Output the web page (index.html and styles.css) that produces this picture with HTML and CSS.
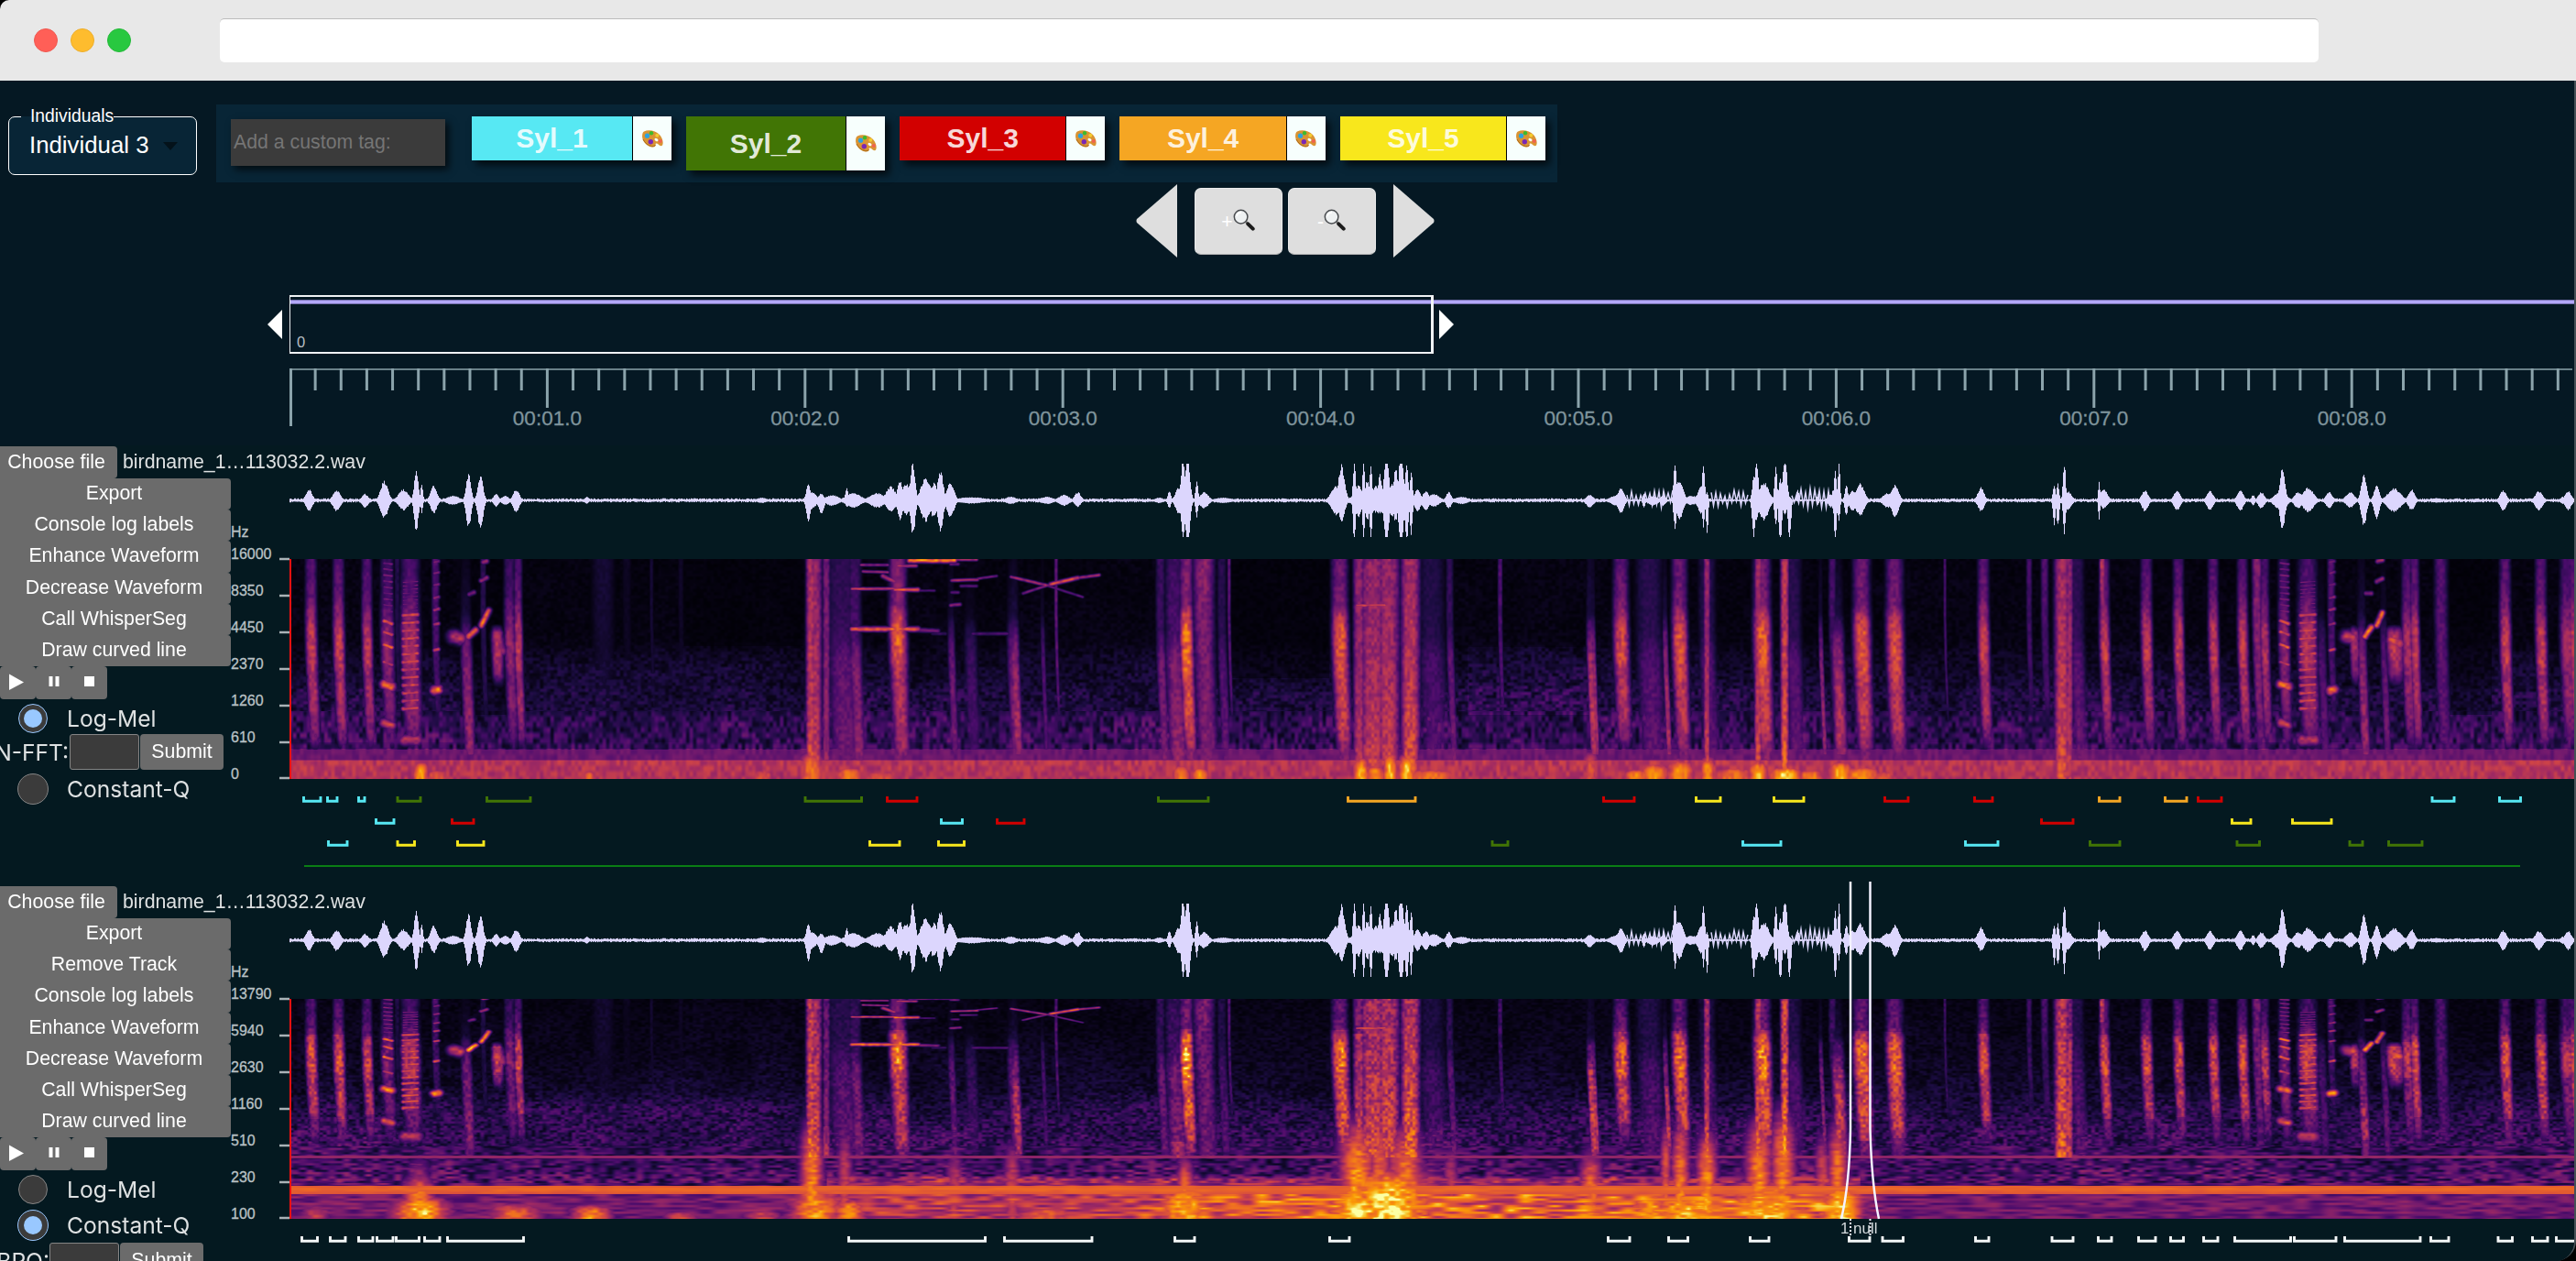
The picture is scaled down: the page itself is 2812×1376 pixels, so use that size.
FILE: index.html
```html
<!DOCTYPE html>
<html lang="en">
<head>
<meta charset="utf-8">
<title>Annotator</title>
<link rel="stylesheet" href="styles.css">
</head>
<body>
<svg class="defs" aria-hidden="true">
  <symbol id="palette" viewBox="0 0 23 19">
    <path d="M2 1.5C7-1 15 .8 19 5c3 3.200 4.500 8.500 3.200 11.200-1 2-3.500.3-4.600-.8-1.400-1.500-3.600-1.200-3 .6.600 1.900-1.600 3-4.200 2.500C5 17.500.5 12.500.1 7.500 0 4.500.4 2.500 2 1.500z" fill="#d99433"/>
    <path d="M1 10c2 4 5.500 7 9.500 7.600 2.500.4 4-.6 3.800-1.700" fill="none" stroke="#a9691b" stroke-width="1"/>
    <ellipse cx="15.500" cy="10.500" rx="2.200" ry="1.500" transform="rotate(35 15.500 10.500)" fill="#f7fffd"/>
    <circle cx="5.500" cy="6.200" r="2.600" fill="#2aa3e0"/>
    <circle cx="10" cy="3.300" r="2.200" fill="#3dba2c"/>
    <circle cx="16.300" cy="5.800" r="2" fill="#f3cc2f"/>
    <circle cx="9.300" cy="12.700" r="2.700" fill="#7a27b5"/>
    <circle cx="19.800" cy="12" r="2.100" fill="#f0644f"/>
  </symbol>
  <symbol id="magnifier" viewBox="0 0 24 24">
    <path d="M14 14l3 3" stroke="#777" stroke-width="2.500"/>
    <path d="M16.300 16.300l5.400 5.400" stroke="#1c1c1c" stroke-width="4" stroke-linecap="round"/>
    <circle cx="8.600" cy="8.600" r="7.300" fill="#eef1f2" stroke="#4a4d50" stroke-width="1.500"/>
    <path d="M4 8a5 5 0 0 1 5-4" fill="none" stroke="#fff" stroke-width="1.500"/>
  </symbol>
</svg>

<header class="browser">
  <div class="dots"><i class="dot red"></i><i class="dot amber"></i><i class="dot green"></i></div>
  <div class="address"></div>
</header>

<main class="app">
  <section class="toolbar">
    <div class="individuals">
      <span class="legend">Individuals</span>
      <span class="value">Individual 3</span>
      <i class="caret"></i>
    </div>
    <div class="tags">
      <div class="tag-input">Add a custom tag:</div>
      <div class="tag cyan"><span>Syl_1</span><b><svg><use href="#palette"/></svg></b></div>
      <div class="tag green active"><span>Syl_2</span><b><svg><use href="#palette"/></svg></b></div>
      <div class="tag red wide"><span>Syl_3</span><b><svg><use href="#palette"/></svg></b></div>
      <div class="tag orange wide"><span>Syl_4</span><b><svg><use href="#palette"/></svg></b></div>
      <div class="tag yellow wide"><span>Syl_5</span><b><svg><use href="#palette"/></svg></b></div>
    </div>
  </section>

  <nav class="zoom-nav">
    <svg class="arrow" viewBox="0 0 45 80"><path d="M45 0V80L1 42Q0 40 1 38z"/></svg>
    <div class="zoom-buttons">
      <div class="zoom-btn"><span>+</span><svg><use href="#magnifier"/></svg></div>
      <div class="zoom-btn"><span>-</span><svg><use href="#magnifier"/></svg></div>
    </div>
    <svg class="arrow" viewBox="0 0 45 80"><path d="M0 0V80L44 42Q45 40 44 38z"/></svg>
  </nav>

  <section class="overview">
    <svg class="handle" viewBox="0 0 16 32"><path d="M16 0V32L0 16z"/></svg>
    <div class="window"><span>0</span></div>
    <svg class="handle" viewBox="0 0 16 32"><path d="M0 0V32L16 16z"/></svg>
    <i class="overview-line"></i>
  </section>

  <svg class="ruler" id="ruler"></svg>

  <section class="track">
    <div class="controls">
      <div class="file"><span class="btn choose">Choose file</span><span class="filename">birdname_1…113032.2.wav</span></div>
      <div class="btn">Export</div>
      <div class="btn">Console log labels</div>
      <div class="btn">Enhance Waveform</div>
      <div class="btn">Decrease Waveform</div>
      <div class="btn">Call WhisperSeg</div>
      <div class="btn">Draw curved line</div>
      <div class="player">
        <span><svg viewBox="0 0 40 36"><path d="M10 8.500L26 17.500 10 26z"/></svg></span>
        <span><svg viewBox="0 0 40 36"><path d="M14.500 11h4v11h-4zM21.500 11h4v11h-4z"/></svg></span>
        <span><svg viewBox="0 0 40 36"><path d="M14 11h11v11H14z"/></svg></span>
      </div>
      <div class="option"><i class="radio on"></i>Log-Mel</div>
      <div class="param nfft"><span>N-FFT:</span><i></i><b>Submit</b></div>
      <div class="option last"><i class="radio big"></i>Constant-Q</div>
    </div>
    <svg class="axis" data-labels="16000,8350,4450,2370,1260,610,0"></svg>
    <div class="data">
      <canvas class="wave" width="2494" height="124"></canvas>
      <canvas class="spec" width="2494" height="240" data-kind="mel"></canvas>
      <svg class="labels" id="labels-1"></svg>
    </div>
  </section>

  <section class="track">
    <div class="controls">
      <div class="file"><span class="btn choose">Choose file</span><span class="filename">birdname_1…113032.2.wav</span></div>
      <div class="btn">Export</div>
      <div class="btn">Remove Track</div>
      <div class="btn">Console log labels</div>
      <div class="btn">Enhance Waveform</div>
      <div class="btn">Decrease Waveform</div>
      <div class="btn">Call WhisperSeg</div>
      <div class="btn">Draw curved line</div>
      <div class="player">
        <span><svg viewBox="0 0 40 36"><path d="M10 8.500L26 17.500 10 26z"/></svg></span>
        <span><svg viewBox="0 0 40 36"><path d="M14.500 11h4v11h-4zM21.500 11h4v11h-4z"/></svg></span>
        <span><svg viewBox="0 0 40 36"><path d="M14 11h11v11H14z"/></svg></span>
      </div>
      <div class="option"><i class="radio"></i>Log-Mel</div>
      <div class="option"><i class="radio big on"></i>Constant-Q</div>
      <div class="param bpo"><span>BPO:</span><i></i><b>Submit</b></div>
    </div>
    <svg class="axis" data-labels="13790,5940,2630,1160,510,230,100"></svg>
    <div class="data">
      <canvas class="wave" width="2494" height="124"></canvas>
      <canvas class="spec" width="2494" height="240" data-kind="cq"></canvas>
      <svg class="labels" id="labels-2"></svg>
    </div>
    <svg class="selection" viewBox="0 0 60 400">
      <path d="M19 0V270Q18 330 9 368M40.500 0V270Q42 330 50 368"/>
      <path class="dashed" d="M19 368V386M40.500 368V386"/>
      <text x="8" y="384">1</text><text x="22" y="384">null</text>
    </svg>
  </section>
</main>
<script src="charts.js"></script>
</body>
</html>
```
FILE: styles.css
```css
* { box-sizing: border-box; }
body {
  margin: 0;
  width: 2812px;
  height: 1376px;
  overflow: hidden;
  background: #000;
  font-family: "Liberation Sans", Arial, sans-serif;
  color: rgba(255, 255, 255, .87);
}
.defs { position: absolute; width: 0; height: 0; }
i { font-style: normal; }

/* Browser chrome */
.browser {
  display: flex;
  align-items: center;
  height: 88px;
  background: #e8e8e8;
  border-top-left-radius: 10px;
}
.dots { display: flex; gap: 14px; width: 240px; padding-left: 37px; }
.dot { width: 26px; height: 26px; border-radius: 50%; border: 1px solid; }
.dot.red { background: #ff5f57; border-color: #f0574f; }
.dot.amber { background: #febc2e; border-color: #eeae28; }
.dot.green { background: #28c840; border-color: #22ba38; }
.address { width: 2291px; height: 48px; background: #fff; border-top: 1px solid #bcbcbc; border-radius: 5px; }

.app {
  height: 1288px;
  background: #051823;
  border-right: 2px solid #465056;
  border-bottom-right-radius: 22px;
  overflow: hidden;
}

/* Toolbar */
.toolbar { display: flex; align-items: flex-start; gap: 21px; padding: 26px 0 0 9px; }
.individuals {
  display: flex;
  align-items: center;
  width: 206px;
  height: 64px;
  margin-top: 13px;
  padding-left: 22px;
  gap: 15px;
  position: relative;
  background: #082536;
  border: 1px solid #fff;
  border-radius: 7px;
  color: #fff;
  font-size: 25.8px;
}
.individuals .value { margin-bottom: 1px; white-space: nowrap; }
.legend {
  position: absolute;
  left: 13px;
  top: -13px;
  padding-left: 10px;
  font-size: 19.3px;
  line-height: 24px;
  background: linear-gradient(#051823 12px, #082536 12px);
}
.caret { border: 8px solid transparent; border-top: 9px solid #04121a; border-bottom: 0; }
.tags {
  display: flex;
  align-items: flex-start;
  gap: 16px;
  width: 1464px;
  height: 85px;
  padding: 13px 0 0 16px;
  background: #082536;
}
.tag-input {
  width: 234px;
  height: 51px;
  margin: 3px 13px 0 0;
  padding-left: 3px;
  background: #3b3b3b;
  color: #757575;
  font-size: 21.3px;
  line-height: 50px;
  box-shadow: 4px 4px 8px rgba(0, 0, 0, .7);
}
.tag {
  display: flex;
  gap: 1px;
  width: 218px;
  height: 48px;
  background: #000;
  box-shadow: 5px 5px 8px rgba(0, 0, 0, .7);
  font-weight: bold;
  font-size: 30px;
}
.tag.active { width: 217px; height: 59px; }
.tag.wide { width: 224.4px; }
.tag span { flex: 1; display: flex; align-items: center; justify-content: center; }
.tag b { display: flex; align-items: center; justify-content: center; width: 42px; background: #f7fffd; }
.tag b svg { width: 23px; height: 19px; }
.cyan span { background: #57e8f3; }
.green span { background: #417505; }
.red span { background: #d20000; }
.orange span { background: #f5a623; }
.yellow span { background: #f8e71c; }

/* Zoom navigation */
.zoom-nav { display: flex; align-items: center; gap: 19px; height: 80px; margin: 2px 0 0 1239.500px; }
.arrow { width: 45px; height: 80px; fill: #dedede; }
.zoom-buttons { display: flex; gap: 6px; }
.zoom-btn {
  display: flex;
  align-items: center;
  justify-content: center;
  width: 96px;
  height: 73px;
  background: #dedede;
  border: 1px solid #eaeaea;
  border-bottom-color: #b4b4b4;
  border-radius: 7px;
  color: #fff;
  font-size: 21.3px;
}
.zoom-btn span { margin-top: 2px; }
.zoom-btn svg { width: 24px; height: 24px; margin-top: -3px; }

/* Overview strip */
.overview { position: relative; display: flex; align-items: center; gap: 6px; height: 64px; margin-top: 41px; padding-left: 292px; }
.overview .handle { width: 16px; height: 32px; fill: #fff; }
.overview .handle:first-child { margin-right: 2px; }
.window { position: relative; z-index: 1; width: 1249px; height: 64px; border: 2px solid #f0f2f4; border-left-width: 1px; border-right-width: 3px; }
.window span { position: absolute; left: 7px; bottom: 2px; font-size: 16.500px; line-height: 18px; color: #b6bec2; }
.overview-line { position: absolute; left: 316px; right: 0; top: 5px; height: 5px; background: #b3a8f8; border: solid #756fae; border-width: 1px 0; }

.ruler { display: block; width: 2810px; height: 84px; margin-top: 16px; }
.ruler line { stroke: #8ba3ab; }
.ruler text { fill: #7f949c; stroke: #7f949c; stroke-width: .3; font-size: 22.500px; text-anchor: middle; }

/* Tracks */
.track { position: relative; display: grid; grid-template-columns: 252px 64px 2494px; height: 480px; background: #041920; }
.controls { position: relative; z-index: 1; padding-top: 1px; font-size: 21.3px; }
.file { display: flex; height: 35px; gap: 6px; white-space: nowrap; }
.btn {
  width: 255px;
  height: 34.2px;
  margin-left: -3px;
  background: #6b6b6b;
  border-radius: 4px;
  color: #fff;
  line-height: 33px;
  text-align: center;
}
.btn.choose { flex: none; width: 131px; height: 35px; padding-right: 2px; line-height: 34px; }
.filename { line-height: 34px; }
.player { display: flex; height: 36px; }
.player span { width: 39px; border-radius: 4px; background: #6b6b6b; }
.player svg { display: block; width: 40px; height: 36px; fill: #fff; }
.option { display: flex; align-items: center; height: 39px; padding-left: 20px; gap: 21px; font: 24.6px Inter, sans-serif; }
.player + .option { margin-top: 1px; }
.radio { display: flex; align-items: center; justify-content: center; width: 32px; height: 32px; border-radius: 50%; background: #3b3b3b; border: 1.500px solid #858585; }
.radio.big { width: 34px; height: 34px; margin: 0 -1px; }
.radio.on { border-color: #99c8ff; }
.radio.on::after { content: ""; width: 20px; height: 20px; border-radius: 50%; background: #99c8ff; }
.param { display: flex; align-items: center; height: 39px; gap: 1px; font: 24.6px Inter, sans-serif; }
.param span { display: flex; justify-content: flex-end; flex: none; white-space: nowrap; }
.nfft { margin-top: -2px; }
.nfft span { width: 75px; }
.bpo span { width: 54px; margin-right: -1px; }
.param i { width: 76px; height: 39px; background: #3b3b3b; border: 1px solid #858585; border-radius: 3px; }
.param b { width: 91px; height: 39px; background: #6b6b6b; border-radius: 4px; color: #fff; font: 21.3px/38px "Liberation Sans", sans-serif; text-align: center; }
.option.last { margin-top: 1px; }

.axis { width: 64px; height: 380px; overflow: visible; }
.axis text { font-size: 16px; fill: #b9c1c5; stroke: #b9c1c5; stroke-width: .3; }
.axis line { stroke: #a9b3b7; stroke-width: 2.500; }
.data { display: flex; flex-direction: column; }
.wave, .spec, .labels { display: block; flex: none; }
.spec { border-left: 2px solid #f01010; }
.labels { width: 2494px; height: 116px; }
.selection { position: absolute; left: 2001px; top: -4px; width: 60px; height: 400px; fill: none; stroke: #f4f2ff; stroke-width: 2.500; }
.selection .dashed { stroke-dasharray: 2 2; stroke-width: 2; }
.selection text { fill: #d5dadd; stroke: none; font-size: 17px; }
```
FILE: charts.js
```javascript
var SVG = "http://www.w3.org/2000/svg";
var X0 = 316, W = 2494;

function add(parent, name, attrs, text) {
  var el = document.createElementNS(SVG, name);
  for (var k in attrs) el.setAttribute(k, attrs[k]);
  if (text !== undefined) el.textContent = text;
  parent.appendChild(el);
}

/* Time ruler */
(function () {
  var r = document.getElementById("ruler"), step = 28.14;
  add(r, "line", { x1: 316, x2: 2808, y1: 1, y2: 1, "stroke-width": 1.5 });
  for (var i = 0; i * step < 2492; i++) {
    var x = i === 0 ? 317.5 : X0 + i * step;
    add(r, "line", { x1: x, x2: x, y1: 0, y2: i === 0 ? 63 : i % 10 ? 24 : 43, "stroke-width": 3 });
    if (i && i % 10 === 0) add(r, "text", { x: x, y: 62 }, "00:0" + i / 10 + ".0");
  }
})();

/* Frequency axes */
document.querySelectorAll(".axis").forEach(function (a) {
  add(a, "text", { x: 0, y: 100 }, "Hz");
  a.dataset.labels.split(",").forEach(function (t, i) {
    add(a, "text", { x: 0, y: 123.5 + i * 40 }, t);
    add(a, "line", { x1: 53, x2: 64, y1: 124 + i * 40 - (i === 6 ? 1 : 0), y2: 124 + i * 40 - (i === 6 ? 1 : 0) });
  });
});

/* Annotation brackets: [start, end, colour] */
var C = "#57e8f3", G = "#417505", R = "#d20000", O = "#f5a623", Y = "#f8e71c", P = "#f4f7f8";
function brackets(svg, rows) {
  rows.forEach(function (row, n) {
    row.forEach(function (b) {
      var y = 19 + n * 24;
      add(svg, "path", {
        d: "M" + (b[0] - X0 + 1.5) + " " + y + "v5.200H" + (b[1] - X0 - 1) + "v-5.200",
        fill: "none", stroke: b[2], "stroke-width": 2.9
      });
    });
  });
}
brackets(document.getElementById("labels-1"), [
  [[330,351,C],[356,369,C],[390,399,C],[432.5,460,G],[530,580,G],[877.5,941.5,G],[967,1002,R],[1263,1320,G],[1470,1546,O],[1749,1785,R],[1850,1879,Y],[1935,1970,Y],[2056,2084,R],[2154,2176,R],[2290,2315,O],[2362,2388,O],[2398,2426,R],[2653.5,2680,C],[2727,2752.5,C]],
  [[409,431,C],[492,518,R],[1026,1051.5,C],[1087,1119,R],[2227,2264,R],[2435,2458,Y],[2501,2546,Y]],
  [[357,380,C],[432.5,453.5,Y],[498,529,Y],[948,983,Y],[1023,1053.5,Y],[1627.5,1647,G],[1901,1945,C],[2144,2182,C],[2280,2315,G],[2440.5,2467.5,G],[2563.5,2580,G],[2606,2645,G]]
]);
add(document.getElementById("labels-1"), "path", { d: "M16 95H2435", stroke: "#0a7d14", "stroke-width": 2 });
brackets(document.getElementById("labels-2"), [
  [[328,347.5],[359,378],[390,408],[410,430],[431,458.5],[462,481],[487,572.5],[925,1076.5],[1095,1193],[1281,1305],[1450,1474],[1754,1780],[1820,1843.5],[1909,1932],[2017,2042],[2053.5,2078.5],[2155,2172],[2238.5,2264],[2289,2306],[2333,2354],[2368,2384.5],[2404,2422],[2438,2501.5],[2503,2551],[2558,2643],[2652,2674],[2725.5,2743.5],[2763,2782],[2789,2814]]
    .map(function (b) { return [b[0], b[1], P]; })
]);

/* Smooth value noise */
function hash(x, y) {
  var h = Math.imul(x, 374761393) + Math.imul(y, 668265263) | 0;
  h = Math.imul(h ^ (h >>> 13), 1274126177);
  return ((h ^ (h >>> 16)) >>> 0) / 4294967295;
}
function noise(x, y) {
  var a = Math.floor(x), b = Math.floor(y), u = x - a, v = y - b;
  u = u * u * (3 - 2 * u); v = v * v * (3 - 2 * v);
  return (hash(a, b) * (1 - u) + hash(a + 1, b) * u) * (1 - v) + (hash(a, b + 1) * (1 - u) + hash(a + 1, b + 1) * u) * v;
}

/* Waveform bursts: [x, half width, up, down] */
var bursts = [
  [337,6,12,12],[367,7,11,12],[398,6,7,8],[419,7,21,20],[440,9,12,11],[454,4,32,34],[460,2,20,14],[473,6,16,14],[494,12,5,5],[511,4.5,29,30],[524,5,27,32],[541,5,7,7],[551,7,5,5],[563,6,12,13],
  [640,4,4,4],[831,9,3,3],[882,4,19,24],[886,8,9,9],[896,5,8,15],[908,12,6,6],[924,3,13,8],[931,14,8,8],[957,14,8,8],[972,9,15,12],[982,5,22,21],[989,9,18,16],[996,4.500,40,39],[1010,9,25,23],[1019,7,19,19],[1026,5.500,33,34],[1037,7,19,18],[1060,26,3.500,3.500],[1103,10,4,4],[1142,12,4,4],[1161,10,6,6],[1176,6,9,7],
  [1265,8,3,3],[1276,3,10,9],[1286,6,14,14],[1291,4,46,40],[1296,4.5,46,48],[1306,2.5,22,18],[1314,8,9,9],[1335,16,3,3],
  [1458,9,16,16],[1464,6,38,23],[1478,2.5,44,48],[1483,5,18,18],[1488,2,46,44],[1492,4,22,22],[1496,2.500,40,40],[1501,5,16,14],[1506,4,28,16],[1513,4.500,50,50],[1519,5,19,19],[1523,4,36,24],[1529,4.500,50,50],[1535,3,40,48],[1540,2.500,32,38],[1512,40,15,15],[1547,6,12,12],[1556,6,10,12],[1565,10,7,7],[1581,5,9,9],[1595,12,4,4],
  [1735,7,6,8],[1765,12,6,6],[1769,6,13,14],[1794,2.500,13,15],[1804,9,9,10],[1815,5,11,11],[1828,3,38,30],[1833,7,23,20],[1846,12,5,5],[1857,7,15,15],[1859,2.500,42,30],[1863,2,10,40],[1914,3,28,42],[1917,3.5,42,24],[1925,9,20,22],[1938,2.5,36,28],[1943,3,26,48],[1948,4,48,16],[1953,3,4,44],[1962,2.500,22,2],[1984,2,13,9],[1998,6,12,12],[2003,2.500,35,44],[2007,2,44,26],[2015,3,17,16],[2022,7,11,11],[2030,8,18,17],
  [2060,9,8,8],[2068,7,17,18],[2162,6,14,12],[2242,2.500,18,28],[2246,2.500,18,29],[2253,2.500,42,37],[2257,7,10,10],[2291,1.700,20,21],[2296,7,12,9],[2341,6,11,12],[2376,6,11,11],[2412,6,11,11],[2445,6,11,12],[2459,3,6,6],[2468,6,9,9],[2491,5,35,32],[2489,11,10,11],[2508,7,9,9],[2519,10,14,13],[2542,6,9,9],[2565,8,9,8],[2580,5,28,28],[2594,5,17,20],[2613,12,13,13],[2632,6,12,11],[2660,12,2.500,2.500],[2732,6,11,11],[2771,7,10,11],[2797,4,4,4],[2803,6,10,11]
];
document.querySelectorAll(".wave").forEach(function (cv) {
  var g = cv.getContext("2d"), mid = 60, up = new Float32Array(W), dn = new Float32Array(W);
  for (var i = 0; i < W; i++) {
    var n = hash(i, 7), m = hash(i, 11);
    up[i] = .9 + n * 1.4; dn[i] = .9 + m * 1.4;
  }
  bursts.forEach(function (b) {
    for (var i = Math.max(0, Math.floor(b[0] - X0 - 2 * b[1])); i < Math.min(W, b[0] - X0 + 2 * b[1]); i++) {
      var d = (i + X0 - b[0]) / b[1], w = Math.exp(-1.6 * d * d), j = .84 + .2 * hash(i, 3), k = .84 + .2 * hash(i, 5);
      up[i] = Math.max(up[i], b[2] * w * j); dn[i] = Math.max(dn[i], b[3] * w * k);
    }
  });
  g.fillStyle = "#dcd6fd";
  g.strokeStyle = "#dcd6fd";
  g.lineWidth = 1.5;
  /* Slow oscillation where the signal rings between calls */
  [[1776, 1826], [1868, 1910], [1956, 2000]].forEach(function (s) {
    g.beginPath();
    for (var x = s[0]; x <= s[1]; x += 2.5) {
      var amp = 3 + 9 * hash(Math.round(x * 2), 21) * (s[0] === 1956 ? 1.300 : 1);
      g.lineTo(x - X0, mid - 2 + (Math.round((x - s[0]) / 2.5) % 2 ? amp : -amp) * .8);
    }
    g.stroke();
    for (var i = s[0] - X0; i < s[1] - X0; i++) { up[i] *= .55; dn[i] *= .55; }
  });
  for (i = 0; i < W; i++) {
    var u = Math.min(40, up[i]), e = Math.min(40, dn[i]);
    g.fillRect(i, mid - u, 1, u + e);
  }
});

/* Spectrograms */
var stops = [[0,0,4],[27,12,65],[74,12,107],[120,28,109],[165,44,96],[207,68,70],[237,105,37],[251,155,6],[247,209,61],[252,255,164]];
var pos = [0,.125,.25,.375,.5,.625,.75,.875,.95,1];
function inferno(v) {
  v = Math.max(0, Math.min(1, v));
  var i = 0;
  while (i < 8 && v > pos[i + 1]) i++;
  var t = (v - pos[i]) / (pos[i + 1] - pos[i]);
  return stops[i].map(function (c, k) { return c + (stops[i + 1][k] - c) * t; });
}
var lut = [];
for (var q = 0; q < 512; q++) lut.push(inferno(q / 511));

function curve(p, y) {
  if (y <= p[0][0]) return p[0][1];
  for (var i = 1; i < p.length; i++) if (y < p[i][0]) return p[i - 1][1] + (p[i][1] - p[i - 1][1]) * (y - p[i - 1][0]) / (p[i][0] - p[i - 1][0]);
  return p[p.length - 1][1];
}
/* Vertical energy profiles, top to bottom */
var syl = [[0,.27],[40,.33],[62,.46],[78,.58],[110,.6],[128,.48],[145,.53],[165,.5],[195,.36],[210,.1],[214,0]];
var hot = [[0,.34],[50,.4],[62,.6],[80,.72],[120,.72],[135,.62],[185,.6],[205,.45],[215,.4]];
var full = [[0,.5],[80,.54],[140,.58],[200,.64],[218,.68],[240,.7]];
var low = [[0,.06],[60,.12],[80,.3],[110,.42],[140,.46],[190,.5],[212,.45],[218,0]];
var thin = [[0,.3],[150,.26],[185,.1],[190,0]];
var haze = [[0,.2],[80,.22],[110,.34],[160,.36],[215,.4]];
var note = [[70,0],[80,.5],[100,.55],[125,.4],[140,.05],[141,0]];
var cols = [
  [338,6,syl,1],[368,6,syl,1],[399,5.500,syl,.95],[432,3,thin,.5],[421,7,syl,.74],[446,10,syl,.88],[474,4,thin,.9],[507,6,low,.9],[541,6,note,1],[555,6,syl,.75],[564,4.500,syl,.95],[526,3,thin,.6],
  [657,12,thin,.34],[683,5,thin,.22],[710,2,thin,.35],[742,3,thin,.25],
  [888,7,full,.9],[883,5,full,1],[900,4,full,.72],[918,16,haze,.9],[932,7,haze,1.100],[979,9,[[0,.4],[50,.4],[60,.6],[85,.74],[110,.68],[125,.56],[205,.48],[215,.42]],1],[1037,4,low,.75],[1058,7,low,.5],[1106,5,low,1],[1104,6,low,.8],[1137,2.500,low,.6],[1152,1.800,thin,1.100],
  [1266,5,haze,1],[1281,10,haze,1.150],[1294,7,hot,1.080],[1313,11,[[0,.43],[100,.38],[215,.4]],1],[1333,5,haze,.8],[1341,1.800,thin,1],
  [1462,8.500,hot,.98],[1458,6,thin,.8],[1482,6,full,.85],[1497,14,full,.9],[1514,12,full,.92],[1538,10,full,1.020],[1562,14,haze,.7],[1582,4,haze,.9],[1637,2.500,thin,.9],
  [1735,4,low,1.150],[1738,3,low,1],[1769,8,syl,1.070],[1800,14,haze,.8],[1817,3,low,1],[1833,8,hot,.93],[1862,3.500,full,.9],[1863,9,haze,.8],[1923,9,hot,1],[1918,4,full,.95],[1947,4.500,full,1.080],[1957,9,haze,.8],[1987,2.500,low,.9],[2005,7,low,1.080],[2000,4,thin,.8],[2032,9,hot,.96],
  [2068,9,hot,.92],[2123,1.500,thin,.85],[2165,6,syl,1.030],[2215,3,thin,.8],[2232,4,thin,.9],[2250,8,full,.98],[2258,4,full,.85],[2267,8,haze,.85],[2297,5.500,syl,1],[2295,3,[[0,.6],[40,.45],[90,.1]],1],[2343,6,syl,1],[2378,5.500,syl,.98],[2416,5.500,syl,.98],[2448,5.500,syl,1],[2464,5,[[0,.42],[150,.4],[205,.3],[210,0]],1],[2472,5,syl,.88],[2493,6,syl,.75],[2519,10,syl,.9],[2545,4,thin,.9],[2534,5,low,.6],[2570,5,note,.9],[2578,5,low,.95],[2602,4,low,.7],[2614,9,note,1.050],[2628,6,syl,.85],[2636,5,syl,.98],[2665,7,[[0,.26],[110,.3],[200,.3],[208,0]],1],[2735,6,syl,1],[2774,6,syl,1],[2803,8,syl,.85],[2809,4,syl,1]
];
/* Tonal strokes: [x1, y1, x2, y2, thickness, level] */
var strokes = [
  [928,32,975,32,1.4,.58],[975,33,1000,33,1.8,.7],[1000,34,1018,34,1.2,.25],[928,76,1000,76,2.2,.7],[1000,77,1022,78,2,.36],[938,6,967,6,1.3,.42],[940,13,967,14,1.3,.46],[962,18,974,24,2,.5],[978,7,998,7,1.6,.5],[991,1,1040,1,2.2,.86],[1040,0,1064,0,1.5,.5],[1037,23,1065,22,1.4,.5],[1065,21,1086,18,1.2,.35],[1047,29,1064,29,1.4,.28],[1036,50,1046,49,1.6,.42],[1037,36,1044,36,1.5,.28],[1036,5,1044,5,1.5,.36],[1060,81,1098,81,1.6,.25],[1016,81,1030,81,1.6,.2],
  [1102,19,1140,28,1.4,.48],[1140,28,1180,41,1.2,.3],[1115,37,1145,27,1.3,.38],[1145,27,1175,20,1.7,.64],[1175,20,1198,17,1.4,.46],[1480,50,1510,50,1.8,.62],
  [509,84,517,77,2.600,.82],[523,72,531,56,2.5,.74],[525,3,529,2,2,.5],[523,23,529,20,2,.45],[510,38,515,36,2,.35],[493,84,500,86,5.5,.56],[541,84,545,100,5,.46],
  [2561,84,2568,86,5.5,.58],[2581,84,2588,74,2.600,.82],[2594,72,2600,58,2.5,.74],[2595,2,2600,1,2,.5],[2594,24,2600,21,2,.45],[2610,88,2618,92,5,.64],[2582,37,2588,37,2,.35]
];
[[421,0],[2493,0]].forEach(function (s) {
  for (var y = 4; y < 62; y += 6.5) strokes.push([s[0] - 4, y, s[0] + 4, y + 1, 1.5, .36]);
  [[68,.72],[80,.66],[94,.72],[113,.56],[137,.76],[179,.62]].forEach(function (b) { strokes.push([s[0] - 4, b[0] - 1, s[0] + 4, b[0] + 2, b[0] > 130 ? 4 : 2, b[1]]); });
});
[446, 2519].forEach(function (x) {
  for (var y = 24; y < 166; y += y < 60 ? 4 : 8.5) strokes.push([x - 8, y + 1, x + 7, y, y < 60 ? 1.1 : 2.1, y < 60 ? .34 : .61]);
  strokes.push([x - 7, 197, x + 7, 197, 5, .55]);
});
[474, 2545].forEach(function (x) {
  [[2,.36],[14,.36],[27,.38],[41,.46],[54,.56],[70,.5],[98,.64],[142,.8]].forEach(function (b) { strokes.push([x - 2, b[0] + 1, x + 2, b[0], b[0] > 140 ? 4 : 1.8, b[1]]); });
});
/* Low frequency energy: [x, width, height, level] */
var lowsMel = [[457,8,18,.9],[475,14,10,.72],[641,7,9,.74],[830,14,10,.7],[884,12,26,.82],[925,14,12,.84],[960,20,9,.7],[1288,9,14,.86],[1308,9,12,.88],[1484,8,22,.94],[1500,10,14,.88],[1516,7,26,.95],[1534,8,24,.97],[1560,30,10,.8],[1735,8,28,.68],[1785,14,10,.85],[1805,14,16,.88],[1833,14,20,.87],[1863,7,22,.92],[1890,24,12,.8],[1918,10,18,.92],[1948,17,12,1],[1975,14,10,.85],[2008,12,18,.94],[2030,22,13,.85],[2055,16,9,.72]];
var lowsCq = [[457,26,22,.97],[455,14,42,.86],[455,10,60,.55],[560,26,16,.75],[343,14,14,.6],[643,18,14,.88],[741,16,8,.66],[830,18,9,.64],[884,10,92,.86],[889,24,32,.88],[925,16,20,.86],[920,7,84,.62],[1292,26,34,.94],[1292,8,60,.75],[1480,16,96,.88],[1514,44,50,1.020],[1482,34,30,1],[1532,16,90,.82],[1505,10,100,.76],[1735,10,66,.78],[1737,20,10,.76],[1582,7,70,.58],[1800,20,30,.9],[1833,8,90,.84],[1862,9,84,.88],[1840,46,24,.93],[1817,5,92,.7],[1919,12,94,.86],[1945,11,104,.84],[1930,42,38,.93],[1988,7,80,.66],[2005,9,92,.82],[2009,20,34,1],[1040,8,66,.6],[1103,8,72,.62],[1140,30,12,.76]];

var warp = [[0,4],[52,80],[85,120],[116,160],[152,200],[165,211],[175,214],[240,216]];
function draw(cv) {
  var cq = cv.dataset.kind === "cq", H = 240, field = new Float32Array(W * H);
  var bg = cq
    ? [[0,.03],[60,.05],[100,.08],[118,.14],[168,.2],[200,.26],[240,.3]]
    : [[0,.025],[90,.03],[105,.06],[138,.09],[142,.115],[164,.12],[172,.17],[206,.19],[208,.34],[218,.34],[220,.56],[240,.54]];
  for (var y = 0; y < H; y++) {
    var base = curve(bg, y);
    for (var i = 0; i < W; i++) {
      var x = i + X0, n = cq ? noise(x / (y > 200 ? 16 : y > 160 ? 8 : 4), y / 2.4) : noise(x / 3.8, y / (y > 165 ? 6 : 3.4));
      var patch = .7 + .6 * noise(x / 40, y / 30 + 300), floor = base * (y < 200 ? patch : 1);
      if (!cq && y < 170 && ((x > 500 && x < 560) || (x > 1340 && x < 1450 && y < 130) || (x > 740 && x < 875 && y < 95) || x > 2670 && x < 2720)) floor *= .6;
      if (!cq && y > 95 && y < 170 && x > 1600 && x < 1735) floor *= 1.4;
      if (cq && y > 212) {
        var wide = .38 + .2 / (1 + Math.exp((900 - x) / 30)) + .16 / (1 + Math.exp((1270 - x) / 30)) - .38 / (1 + Math.exp((2030 - x) / 8));
        field[y * W + i] = wide * (.6 + .7 * n);
      } else field[y * W + i] = !cq && y > 207 ? floor * (.82 + .32 * n) : floor * (.25 + 1.5 * n);
      if (cq && y > 203 && y < 213) field[y * W + i] = .71 + .06 * n - Math.abs(y - 207) * .012;
      if (cq && y > 170 && y < 174) field[y * W + i] = .42 + .05 * n;
      if (cq && y > 192 && y <= 203 && x > 900 && x < 2030) field[y * W + i] += .2 * Math.min(1, (y - 192) / 4);
    }
  }
  function put(i, y, v) {
    if (i < 0 || i >= W || y < 0 || y >= H) return;
    var k = y * W + i;
    if (v > field[k]) field[k] = v;
  }
  for (y = 0; y < H; y++) {
    var sy = cq ? curve(warp, y) : y;
    cols.forEach(function (c) {
      var g = curve(c[2], sy) * c[3];
      if (cq) {
        g = g > .45 ? g * 1.12 : g * .9;
        if (y > 172) return;
      } else if (y > 219 && c[2] !== full) return;
      var bend = sy > 110 ? (sy - 110) / 26 : sy > 60 ? (sy - 60) / 50 - 1 : -1;
      if (c[2] === full) bend = 0;
      var cx = c[0] - X0 + bend, hw = c[1];
      for (var i = Math.floor(cx - hw * 1.9); i < cx + hw * 1.9; i++) {
        var d = (i - cx) / hw, t = noise((i + X0) / 3, y / (cq ? 3 : 4) + 50);
        put(i, y, g * Math.exp(-.9 * Math.pow(Math.abs(d), 3)) * (cq ? .66 + .58 * t : .78 + .38 * t));
      }
    });
  }
  strokes.forEach(function (s) {
    var x0 = s[0] - X0, x1 = s[2] - X0, pad = s[4] * 2 + 2;
    for (var y = 0; y < (cq ? 172 : H); y++) {
      var sy = cq ? curve(warp, y) : y;
      if (sy < Math.min(s[1], s[3]) - pad || sy > Math.max(s[1], s[3]) + pad) continue;
      for (var i = Math.floor(x0 - pad); i < x1 + pad; i++) {
        var t = Math.max(0, Math.min(1, ((i - x0) * (x1 - x0) + (sy - s[1]) * (s[3] - s[1])) / ((x1 - x0) * (x1 - x0) + (s[3] - s[1]) * (s[3] - s[1]))));
        var dx = i - x0 - (x1 - x0) * t, dy = sy - s[1] - (s[3] - s[1]) * t, d2 = (dx * dx + dy * dy) / (s[4] * s[4]);
        put(i, y, s[5] * (cq ? 1.08 : 1) * Math.exp(-.6 * d2) * (.78 + .36 * noise(i / 4, y / 3 + 9)));
      }
    }
  });
  (cq ? lowsCq : lowsMel).forEach(function (l) {
    var cx = l[0] - X0;
    for (var y = Math.floor(H - l[2] * 1.3); y < H; y++) for (var i = Math.floor(cx - l[1] * 1.9); i < cx + l[1] * 1.9; i++) {
      var dx = (i - cx) / l[1], dy = (H - y) / l[2], t = cq ? noise((i + X0) / 6, y / 2.6 + 90) : noise((i + X0) / 3, y / 5 + 90);
      put(i, y, l[3] * Math.exp(-.5 * dx * dx - .45 * Math.pow(dy, 5)) * (cq ? .8 + .28 * t : .86 + .2 * t));
    }
  });
  var g = cv.getContext("2d"), img = g.createImageData(W, H);
  for (var k = 0; k < W * H; k++) {
    var c = lut[Math.max(0, Math.min(511, Math.round(field[k] * 511)))];
    img.data[k * 4] = c[0]; img.data[k * 4 + 1] = c[1]; img.data[k * 4 + 2] = c[2]; img.data[k * 4 + 3] = 255;
  }
  g.putImageData(img, 0, 0);
}
document.querySelectorAll(".spec").forEach(draw);
```
